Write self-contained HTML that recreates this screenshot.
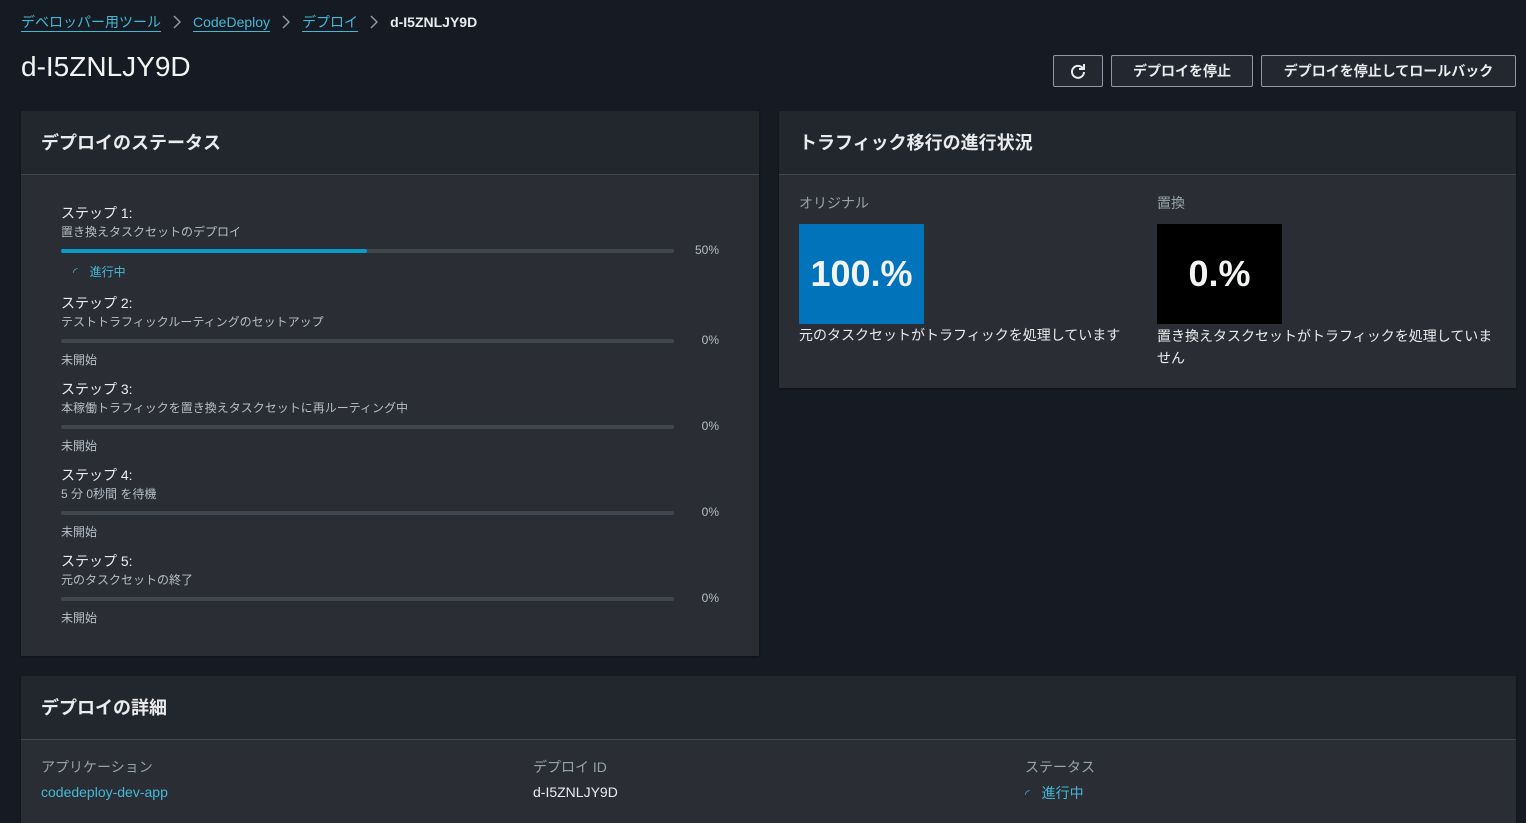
<!DOCTYPE html>
<html><head><meta charset="utf-8"><style>
*{margin:0;padding:0;box-sizing:border-box}
html{width:1526px;height:823px;overflow:hidden}
body{width:1526px;height:823px;background:#161a22;font-family:"Liberation Sans","Noto Sans CJK JP",sans-serif;color:#d5dbdb;position:relative;overflow:hidden;font-size:14px}
.a{position:absolute;white-space:nowrap}
.lnk{color:#44b9d6;text-decoration:underline;text-underline-offset:4px}
.chev{display:inline-block;width:32px;text-align:center;vertical-align:middle}
.btn{position:absolute;top:55px;height:32px;border:1px solid #8d99a8;border-radius:2px;background:#232830;color:#e9ebed;font-weight:bold;font-size:14px;display:flex;align-items:center;justify-content:center}
.panel{position:absolute;background:#2a2d33;box-shadow:0 1px 2px rgba(0,0,0,.4)}
.ph{position:absolute;left:0;right:0;top:0;height:64px;background:#22262d;border-bottom:1px solid #414750}
.ph span{position:absolute;left:20px;top:18px;font-size:18px;font-weight:bold;color:#e9ebed}
.st{font-size:14px;color:#e9ebed}
.sd{font-size:12px;color:#b6bec9}
.bar{position:absolute;left:40px;width:613px;height:4px;background:#414750;border-radius:2px}
.pc{font-size:12px;color:#b6bec9;text-align:right;width:40px}
.ns{font-size:12px;color:#b6bec9}
.lbl{font-size:14px;color:#95a5a6}
</style></head><body>
<div class="a" style="left:21px;top:12px;font-size:14px"><span class="lnk">デベロッパー用ツール</span><span class="chev"><svg width="8" height="14" viewBox="0 0 8 14"><path d="M1 1l6 6-6 6" fill="none" stroke="#8d99a8" stroke-width="1.5"/></svg></span><span class="lnk">CodeDeploy</span><span class="chev"><svg width="8" height="14" viewBox="0 0 8 14"><path d="M1 1l6 6-6 6" fill="none" stroke="#8d99a8" stroke-width="1.5"/></svg></span><span class="lnk">デプロイ</span><span class="chev"><svg width="8" height="14" viewBox="0 0 8 14"><path d="M1 1l6 6-6 6" fill="none" stroke="#8d99a8" stroke-width="1.5"/></svg></span><b style="color:#e9ebed">d-I5ZNLJY9D</b></div>
<div class="a" style="left:21px;top:51px;font-size:28px;color:#f2f3f3">d-I5ZNLJY9D</div>
<div class="btn" style="left:1053px;width:50px"><svg width="18" height="18" viewBox="0 0 18 18"><path d="M14 6.5A6 6 0 1 0 15 10" fill="none" stroke="#e9ebed" stroke-width="2"/><path d="M15 2v5h-5" fill="none" stroke="#e9ebed" stroke-width="2"/></svg></div>
<div class="btn" style="left:1111px;width:142px">デプロイを停止</div>
<div class="btn" style="left:1261px;width:255px">デプロイを停止してロールバック</div>

<div class="panel" style="left:21px;top:111px;width:738px;height:545px">
<div class="ph"><span>デプロイのステータス</span></div>
<div class="a st" style="left:40px;top:92px">ステップ 1:</div>
<div class="a sd" style="left:40px;top:112px">置き換えタスクセットのデプロイ</div>
<div class="bar" style="top:138px"><div style="width:306px;height:4px;background:#0a9bc7;border-radius:2px"></div></div>
<div class="a pc" style="left:658px;top:132px">50%</div>
<div class="a" style="left:52px;top:152px;font-size:12px;color:#44b9d6"><span style="margin-right:12px">◜</span>進行中</div>

<div class="a st" style="left:40px;top:182px">ステップ 2:</div>
<div class="a sd" style="left:40px;top:202px">テストトラフィックルーティングのセットアップ</div>
<div class="bar" style="top:228px"></div>
<div class="a pc" style="left:658px;top:222px">0%</div>
<div class="a ns" style="left:40px;top:240px">未開始</div>

<div class="a st" style="left:40px;top:268px">ステップ 3:</div>
<div class="a sd" style="left:40px;top:288px">本稼働トラフィックを置き換えタスクセットに再ルーティング中</div>
<div class="bar" style="top:314px"></div>
<div class="a pc" style="left:658px;top:308px">0%</div>
<div class="a ns" style="left:40px;top:326px">未開始</div>

<div class="a st" style="left:40px;top:354px">ステップ 4:</div>
<div class="a sd" style="left:40px;top:374px">5 分 0秒間 を待機</div>
<div class="bar" style="top:400px"></div>
<div class="a pc" style="left:658px;top:394px">0%</div>
<div class="a ns" style="left:40px;top:412px">未開始</div>

<div class="a st" style="left:40px;top:440px">ステップ 5:</div>
<div class="a sd" style="left:40px;top:460px">元のタスクセットの終了</div>
<div class="bar" style="top:486px"></div>
<div class="a pc" style="left:658px;top:480px">0%</div>
<div class="a ns" style="left:40px;top:498px">未開始</div>
</div>

<div class="panel" style="left:779px;top:111px;width:737px;height:277px">
<div class="ph"><span>トラフィック移行の進行状況</span></div>
<div class="a lbl" style="left:20px;top:82px">オリジナル</div>
<div class="a" style="left:20px;top:113px;width:125px;height:100px;background:#0073bb;color:#f2f3f3;font-size:36px;font-weight:bold;display:flex;align-items:center;justify-content:center">100.%</div>
<div class="a" style="left:20px;top:214px;font-size:14px;color:#e9ebed">元のタスクセットがトラフィックを処理しています</div>
<div class="a lbl" style="left:378px;top:82px">置換</div>
<div class="a" style="left:378px;top:113px;width:125px;height:100px;background:#000;color:#f2f3f3;font-size:36px;font-weight:bold;display:flex;align-items:center;justify-content:center">0.%</div>
<div class="a" style="left:378px;top:214px;font-size:14px;color:#e9ebed;line-height:22px">置き換えタスクセットがトラフィックを処理していま<br>せん</div>
</div>

<div class="panel" style="left:21px;top:676px;width:1495px;height:147px">
<div class="ph"><span>デプロイの詳細</span></div>
<div class="a lbl" style="left:20px;top:81px">アプリケーション</div>
<div class="a" style="left:20px;top:108px;color:#44b9d6">codedeploy-dev-app</div>
<div class="a lbl" style="left:512px;top:81px">デプロイ ID</div>
<div class="a" style="left:512px;top:108px;color:#e9ebed">d-I5ZNLJY9D</div>
<div class="a lbl" style="left:1004px;top:81px">ステータス</div>
<div class="a" style="left:1004px;top:107px;color:#44b9d6"><span style="margin-right:12px;font-size:12px">◜</span>進行中</div>
</div>
</body></html>
